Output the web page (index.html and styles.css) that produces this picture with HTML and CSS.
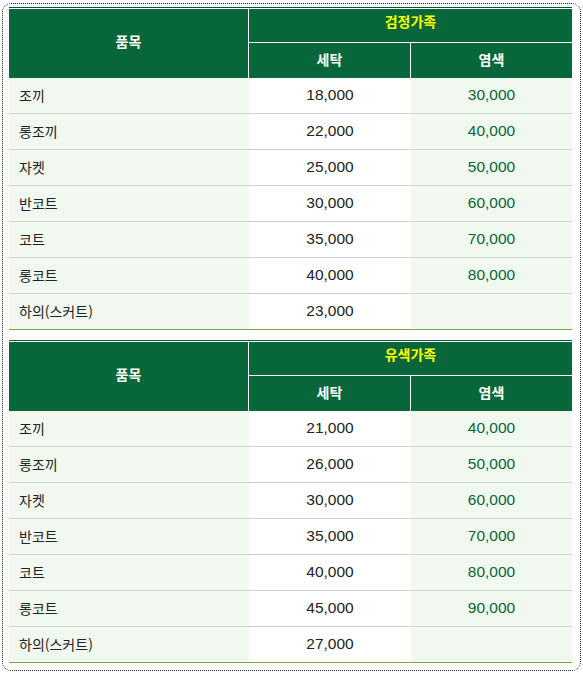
FILE: index.html
```html
<!DOCTYPE html>
<html lang="ko">
<head>
<meta charset="utf-8">
<title>가격표</title>
<link rel="stylesheet" href="styles.css">
</head>
<body>
<div class="box">
  <table class="price">
    <colgroup><col class="c1"><col class="c2"><col class="c3"></colgroup>
    <thead>
      <tr><th rowspan="2" class="item">품목</th><th colspan="2" class="group">검정가족</th></tr>
      <tr><th class="sub wash">세탁</th><th class="sub dye">염색</th></tr>
    </thead>
    <tbody>
      <tr><td class="name">조끼</td><td class="num">18,000</td><td class="num dye">30,000</td></tr>
      <tr><td class="name">롱조끼</td><td class="num">22,000</td><td class="num dye">40,000</td></tr>
      <tr><td class="name">자켓</td><td class="num">25,000</td><td class="num dye">50,000</td></tr>
      <tr><td class="name">반코트</td><td class="num">30,000</td><td class="num dye">60,000</td></tr>
      <tr><td class="name">코트</td><td class="num">35,000</td><td class="num dye">70,000</td></tr>
      <tr><td class="name">롱코트</td><td class="num">40,000</td><td class="num dye">80,000</td></tr>
      <tr class="last"><td class="name">하의(스커트)</td><td class="num">23,000</td><td class="num dye"></td></tr>
    </tbody>
  </table>
  <table class="price">
    <colgroup><col class="c1"><col class="c2"><col class="c3"></colgroup>
    <thead>
      <tr><th rowspan="2" class="item">품목</th><th colspan="2" class="group">유색가족</th></tr>
      <tr><th class="sub wash">세탁</th><th class="sub dye">염색</th></tr>
    </thead>
    <tbody>
      <tr><td class="name">조끼</td><td class="num">21,000</td><td class="num dye">40,000</td></tr>
      <tr><td class="name">롱조끼</td><td class="num">26,000</td><td class="num dye">50,000</td></tr>
      <tr><td class="name">자켓</td><td class="num">30,000</td><td class="num dye">60,000</td></tr>
      <tr><td class="name">반코트</td><td class="num">35,000</td><td class="num dye">70,000</td></tr>
      <tr><td class="name">코트</td><td class="num">40,000</td><td class="num dye">80,000</td></tr>
      <tr><td class="name">롱코트</td><td class="num">45,000</td><td class="num dye">90,000</td></tr>
      <tr class="last"><td class="name">하의(스커트)</td><td class="num">27,000</td><td class="num dye"></td></tr>
    </tbody>
  </table>
</div>
</body>
</html>
```
FILE: styles.css
```css
html, body {
  margin: 0;
  padding: 0;
  background: #ffffff;
}
body {
  font-family: "Noto Sans CJK KR", "Liberation Sans", sans-serif;
  color: #222222;
}
.box {
  box-sizing: border-box;
  width: 579px;
  height: 668px;
  margin: 3px 0 0 2px;
  padding: 3px 0 0 6px;
  border: 1px dotted #222222;
  border-radius: 9px;
  display: flex;
  flex-direction: column;
  gap: 10px;
}
.price {
  width: 563px;
  table-layout: fixed;
  border-collapse: separate;
  border-spacing: 0;
  border-top: 1px solid #0b5530;
}
.c1 { width: 240px; }
.c2 { width: 162px; }
.c3 { width: 161px; }
.price th {
  background: #08673a;
  color: #ffffff;
  font-size: 14px;
  font-weight: bold;
  padding: 0;
  text-align: center;
}
.price th.item {
  border-top: 1px solid #ffffff;
  border-right: 1px solid #ffffff;
  padding-bottom: 6px;
}
.price th.group {
  color: #ffff00;
  height: 35px;
  border-top: 1px solid #ffffff;
  border-bottom: 1px solid #ffffff;
  padding-bottom: 10px;
  box-sizing: border-box;
}
.price th.sub {
  height: 31px;
  padding-bottom: 4px;
}
.price th.wash {
  border-right: 1px solid #ffffff;
}
.price td {
  height: 33px;
  padding: 0 0 2px 0;
  border-bottom: 1px solid #d3d3d3;
  background: #ffffff;
}
.price tr.last td {
  border-bottom: 1px solid #7aab3a;
}
.price td.name {
  background: #f1f8f0;
  padding-left: 10px;
  font-size: 14px;
  color: #222222;
}
.price td.num {
  text-align: center;
  font-family: "Liberation Sans", "Noto Sans CJK KR", sans-serif;
  font-size: 15.5px;
  color: #222222;
}
.price td.dye {
  background: #f1f8f0;
  color: #0a6634;
}
```
